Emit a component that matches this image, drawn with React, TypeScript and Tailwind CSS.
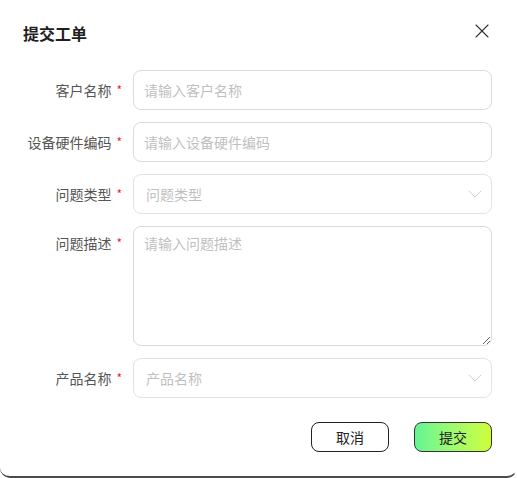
import { ChevronDown, X } from 'lucide-react'

const FONT = '"Noto Sans CJK SC", "Noto Sans", sans-serif'

function Label({ text, top }: { text: string; top?: boolean }) {
  return (
    <div className={`w-[122px] shrink-0 flex justify-end text-sm text-[#555] ${top ? 'pt-[7px]' : 'items-center h-10'}`}>
      <span>{text}</span>
      <span className="text-[#f5222d] ml-[5px] text-xs leading-5">*</span>
    </div>
  )
}

function Field({ label, placeholder }: { label: string; placeholder: string }) {
  return (
    <div className="flex gap-[11px]">
      <Label text={label} />
      <input
        placeholder={placeholder}
        className="w-[359px] h-10 rounded-lg border border-[#dcdce0] px-[10px] text-sm outline-none placeholder:text-[#bfbfbf]"
      />
    </div>
  )
}

function Select({ label, placeholder }: { label: string; placeholder: string }) {
  return (
    <div className="flex gap-[11px]">
      <Label text={label} />
      <div className="w-[359px] h-10 rounded-lg border border-[#e2e2e8] pl-[12px] pr-[4px] flex items-center justify-between text-sm text-[#bfbfbf]">
        <span>{placeholder}</span>
        <ChevronDown size={24} strokeWidth={0.9} className="text-[#c8c8cc]" />
      </div>
    </div>
  )
}

export default function App() {
  return (
    <div className="w-[517px] h-[478px] bg-white" style={{ fontFamily: FONT }}>
      <div className="h-full flex flex-col bg-white rounded-b-[10px] border-b-2 border-r border-[#4a4a4a] border-r-white">
        <div className="flex items-center justify-between pl-[23px] pr-[22px] pt-[21px] pb-[25px]">
          <h2 className="text-base font-bold text-[#1f1f1f] leading-6">提交工单</h2>
          <X size={24} strokeWidth={1.1} className="text-[#333] -mt-[4px]" />
        </div>

        <div className="flex flex-col gap-3">
          <Field label="客户名称" placeholder="请输入客户名称" />
          <Field label="设备硬件编码" placeholder="请输入设备硬件编码" />
          <Select label="问题类型" placeholder="问题类型" />
          <div className="flex gap-[11px]">
            <Label text="问题描述" top />
            <textarea
              placeholder="请输入问题描述"
              className="w-[359px] h-[120px] rounded-lg border border-[#d9d9d9] px-[10px] py-[6px] text-sm outline-none placeholder:text-[#bfbfbf]"
            />
          </div>
          <Select label="产品名称" placeholder="产品名称" />
        </div>

        <div className="flex justify-end gap-[25px] pr-[24px] mt-[24px]">
          <button className="w-[78px] h-[30px] rounded-lg border border-[#222] bg-white text-sm text-[#222]">取消</button>
          <button className="w-[78px] h-[30px] rounded-lg border border-[#333] bg-gradient-to-r from-[#62f592] to-[#cdfe33] text-sm text-[#222]">提交</button>
        </div>
      </div>
    </div>
  )
}
